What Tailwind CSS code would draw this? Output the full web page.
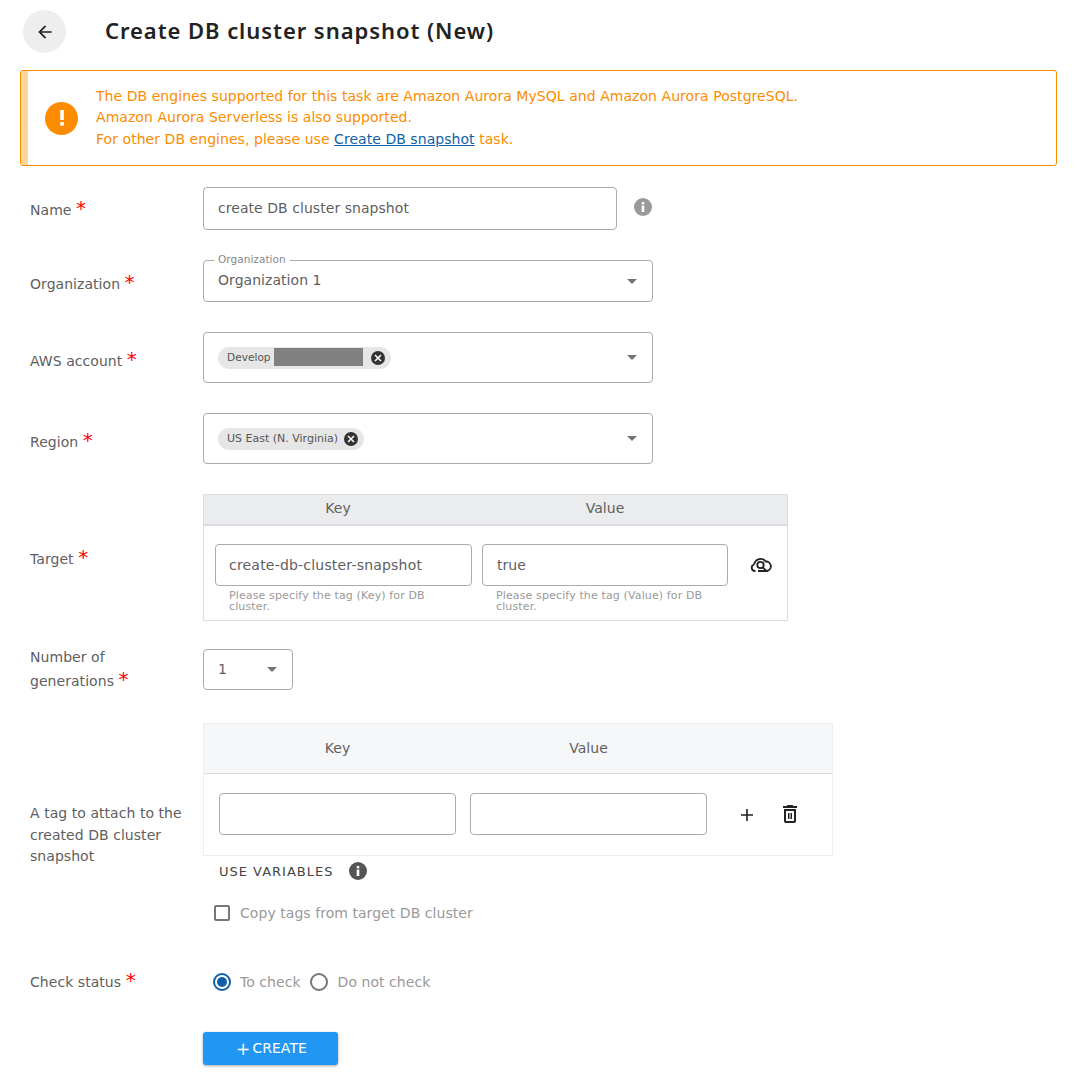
<!DOCTYPE html>
<html lang="en"><head><meta charset="utf-8"><title>Create DB cluster snapshot</title>
<script src="https://cdn.jsdelivr.net/npm/@tailwindcss/browser@4"></script></head>
<body class="bg-white font-['DejaVu_Sans',sans-serif] text-[14px] tracking-[0.05px] text-[#606060]">
<div class="w-[1078px] h-[1078px] overflow-hidden relative">
  <header class="h-[70px] flex items-center pl-[23px] pb-[7px]">
    <button class="w-[43px] h-[43px] rounded-full bg-[#eee] flex items-center justify-center text-[#222]">
      <svg width="20" height="20" viewBox="0 0 24 24" fill="currentColor"><path d="M20 11H7.830l5.590-5.590L12 4l-8 8 8 8 1.410-1.410L7.830 13H20v-2z"/></svg>
    </button>
    <h1 class="ml-[39px] mb-[3px] text-[22px] font-semibold text-[#222] leading-none font-['Noto_Sans'] tracking-[0.94px]">Create DB cluster snapshot (New)</h1>
  </header>

  <div class="mx-[20px] w-[1037px] h-[96px] border border-[#fb8c00] rounded-[3px] flex items-center overflow-hidden">
    <div class="w-[7px] h-full bg-[#ffd59e] shrink-0"></div>
    <div class="w-[33px] h-[33px] rounded-full bg-[#fb8c00] ml-[17px] shrink-0 flex items-center justify-center text-white">
      <svg width="6" height="18" viewBox="0 0 6 18" fill="currentColor"><rect x="1.200" y="1" width="3.600" height="10"/><rect x="1.200" y="13" width="3.600" height="3.600"/></svg>
    </div>
    <div class="ml-[18px] text-[#fb8c00] leading-[21.5px]">
      <p>The DB engines supported for this task are Amazon Aurora MySQL and Amazon Aurora PostgreSQL.</p>
      <p>Amazon Aurora Serverless is also supported.</p>
      <p>For other DB engines, please use <a class="text-[#0f5fa8] underline">Create DB snapshot</a> task.</p>
    </div>
  </div>

  <main class="pl-[30px]">
    <div class="flex items-center mt-[21px] h-[43px]">
      <label class="w-[173px] pt-[2px]">Name <span class="text-[#f00] text-[20px] leading-none">*</span></label>
      <div class="w-[414px] h-[43px] border border-[#aaa] rounded-[4px] flex items-center pl-[14px]">create DB cluster snapshot</div>
      <span class="ml-[17px] mb-[4px] w-[18px] h-[18px] rounded-full bg-[#999] text-white flex items-center justify-center">
        <svg width="4" height="10" viewBox="0 0 4 10" fill="currentColor"><rect x="0.700" y="0" width="2.600" height="2.400"/><rect x="0.700" y="3.600" width="2.600" height="6.400"/></svg>
      </span>
    </div>

    <div class="flex items-center mt-[30px] h-[42px]">
      <label class="w-[173px] pt-[4px]">Organization <span class="text-[#f00] text-[20px] leading-none">*</span></label>
      <div class="relative w-[450px] h-[42px] border border-[#aaa] rounded-[4px] flex items-center justify-between pl-[14px] pr-[15px]">
        <span class="absolute -top-[9px] left-[10px] bg-white px-[4px] text-[10.5px] leading-[14px] text-[#888]">Organization</span>
        <span class="mb-[2px]">Organization 1</span>
        <span class="w-0 h-0 border-x-[5px] border-x-transparent border-t-[5px] border-t-[#757575]"></span>
      </div>
    </div>

    <div class="flex items-center mt-[30px] h-[51px]">
      <label class="w-[173px] pt-[6px]">AWS account <span class="text-[#f00] text-[20px] leading-none">*</span></label>
      <div class="w-[450px] h-[51px] border border-[#aaa] rounded-[4px] flex items-center justify-between pl-[14px] pr-[15px]">
        <span class="relative h-[22px] w-[173px] rounded-full bg-[#e6e6e6] flex items-center pl-[9px] pt-[1px] text-[10.5px] text-[#555]">
          <span>Develop</span><span class="absolute left-[56px] top-[1px] w-[89px] h-[18px] bg-[#808080]"></span>
          <span class="absolute right-[6px] top-[4px] w-[14px] h-[14px] rounded-full bg-[#333] text-white flex items-center justify-center"><svg width="8" height="8" viewBox="0 0 8 8" stroke="currentColor" stroke-width="1.500"><path d="M1 1l6 6M7 1L1 7"/></svg></span>
        </span>
        <span class="w-0 h-0 border-x-[5px] border-x-transparent border-t-[5px] border-t-[#757575]"></span>
      </div>
    </div>

    <div class="flex items-center mt-[30px] h-[51px]">
      <label class="w-[173px] pt-[6px]">Region <span class="text-[#f00] text-[20px] leading-none">*</span></label>
      <div class="w-[450px] h-[51px] border border-[#aaa] rounded-[4px] flex items-center justify-between pl-[14px] pr-[15px]">
        <span class="relative h-[22px] w-[146px] rounded-full bg-[#e6e6e6] flex items-center pl-[9px] pt-[1px] text-[11px] tracking-normal text-[#555]">
          <span>US East (N. Virginia)</span>
          <span class="absolute right-[6px] top-[4px] w-[14px] h-[14px] rounded-full bg-[#333] text-white flex items-center justify-center"><svg width="8" height="8" viewBox="0 0 8 8" stroke="currentColor" stroke-width="1.500"><path d="M1 1l6 6M7 1L1 7"/></svg></span>
        </span>
        <span class="w-0 h-0 border-x-[5px] border-x-transparent border-t-[5px] border-t-[#757575]"></span>
      </div>
    </div>

    <div class="flex items-center mt-[30px] h-[127px]">
      <label class="w-[173px] pt-[2px]">Target <span class="text-[#f00] text-[20px] leading-none">*</span></label>
      <div class="w-[585px] h-[127px] border border-[#ddd]">
        <div class="h-[31px] bg-[#ebecee] border-b-2 border-[#dcdde0] flex items-center pb-[2px]">
          <span class="w-[268px] text-center">Key</span><span class="w-[266px] text-center">Value</span>
        </div>
        <div class="flex pl-[11px] pt-[18px]">
          <div class="w-[257px]">
            <div class="h-[42px] border border-[#aaa] rounded-[4px] flex items-center pl-[13px] tracking-[0.2px]">create-db-cluster-snapshot</div>
            <p class="pl-[14px] mt-[4px] text-[11px] leading-[11px] tracking-[0.13px] text-[#999]">Please specify the tag (Key) for DB<br>cluster.</p>
          </div>
          <div class="w-[246px] ml-[10px]">
            <div class="h-[42px] border border-[#aaa] rounded-[4px] flex items-center pl-[14px]">true</div>
            <p class="pl-[14px] mt-[4px] text-[11px] leading-[11px] tracking-[0.13px] text-[#999]">Please specify the tag (Value) for DB<br>cluster.</p>
          </div>
          <svg class="ml-[22px] mt-[11px] text-[#222]" width="22" height="20" viewBox="0 0 22 20" fill="none" stroke="currentColor" stroke-width="1.800"><path d="M5.500 16H5a3.300 3.300 0 0 1-.8-6.500" /><path d="M4.200 9.500A6.500 6.500 0 0 1 15.800 6.500 4.800 4.800 0 0 1 17 16H8"/><circle cx="10.500" cy="10" r="3.200"/><path d="M12.800 12.300l3.500 3.500"/></svg>
        </div>
      </div>
    </div>

    <div class="flex items-center mt-[28px] h-[41px]">
      <label class="w-[173px] leading-[23px] -mt-[1px]">Number of<br>generations <span class="text-[#f00] text-[20px] leading-none">*</span></label>
      <div class="w-[90px] h-[41px] border border-[#aaa] rounded-[4px] flex items-center justify-between pl-[14px] pr-[15px]">
        <span>1</span>
        <span class="w-0 h-0 border-x-[5px] border-x-transparent border-t-[5px] border-t-[#757575]"></span>
      </div>
    </div>

    <div class="flex items-start mt-[33px]">
      <label class="w-[173px] leading-[21.500px] mt-[80px]">A tag to attach to the<br>created DB cluster<br>snapshot</label>
      <div>
        <div class="w-[630px] h-[133px] border border-[#eee]">
          <div class="h-[50px] bg-[#f6f7f9] border-b border-[#dcdde0] flex items-center">
            <span class="w-[267px] text-center">Key</span><span class="w-[235px] text-center">Value</span>
          </div>
          <div class="flex items-start pl-[15px] pt-[19px]">
            <div class="w-[237px] h-[42px] border border-[#aaa] rounded-[4px]"></div>
            <div class="w-[237px] h-[42px] ml-[14px] border border-[#aaa] rounded-[4px]"></div>
            <svg class="ml-[33px] mt-[15px] text-[#222]" width="14" height="14" viewBox="0 0 14 14" fill="currentColor"><path d="M6.200 1h1.600v5.200H13v1.600H7.800V13H6.200V7.800H1V6.200h5.200z"/></svg>
            <svg class="ml-[24px] mt-[9px] text-[#222]" width="24" height="24" viewBox="0 0 24 24" fill="currentColor"><path d="M6 19c0 1.100.900 2 2 2h8c1.100 0 2-.900 2-2V7H6v12zM8 9h8v10H8V9zm7.500-5l-1-1h-5l-1 1H5v2h14V4h-3.500zM10 11h1.500v6H10zm2.500 0H14v6h-1.500z"/></svg>
          </div>
        </div>
        <div class="flex items-center h-[30px] pl-[16px] text-[13px] tracking-[1px] text-[#444]"><span class="pt-[1px]">USE VARIABLES</span>
          <span class="ml-[16px] w-[18px] h-[18px] rounded-full bg-[#555] text-white flex items-center justify-center">
            <svg width="4" height="10" viewBox="0 0 4 10" fill="currentColor"><rect x="0.700" y="0" width="2.600" height="2.400"/><rect x="0.700" y="3.600" width="2.600" height="6.400"/></svg>
          </span>
        </div>
        <div class="flex items-center mt-[15px] pl-[11px] h-[24px] text-[#999]">
          <span class="w-[16px] h-[16px] border-2 border-[#777] rounded-[2px]"></span>
          <span class="ml-[10px]">Copy tags from target DB cluster</span>
        </div>
      </div>
    </div>

    <div class="flex items-center mt-[45px] h-[24px]">
      <label class="w-[173px] pb-[2px]">Check status <span class="text-[#f00] text-[20px] leading-none">*</span></label>
      <div class="flex items-center pl-[10px] text-[#999]">
        <span class="w-[18px] h-[18px] rounded-full border-2 border-[#0f5fa8] flex items-center justify-center"><span class="w-[10px] h-[10px] rounded-full bg-[#0f5fa8]"></span></span>
        <span class="ml-[9px]">To check</span>
        <span class="ml-[9px] w-[18px] h-[18px] rounded-full border-2 border-[#777]"></span>
        <span class="ml-[10px]">Do not check</span>
      </div>
    </div>

    <div class="pl-[173px] mt-[38px]">
      <button class="w-[135px] h-[33px] rounded-[3px] bg-[#2196f3] text-white text-[14px] shadow-[0_1px_3px_rgba(0,0,0,0.35)] flex items-center justify-center pb-[1px] pl-[2px]"><span class="text-[17px] leading-none mr-[2px] mt-[2px]">+</span>CREATE</button>
    </div>
  </main>
</div>
</body></html>
